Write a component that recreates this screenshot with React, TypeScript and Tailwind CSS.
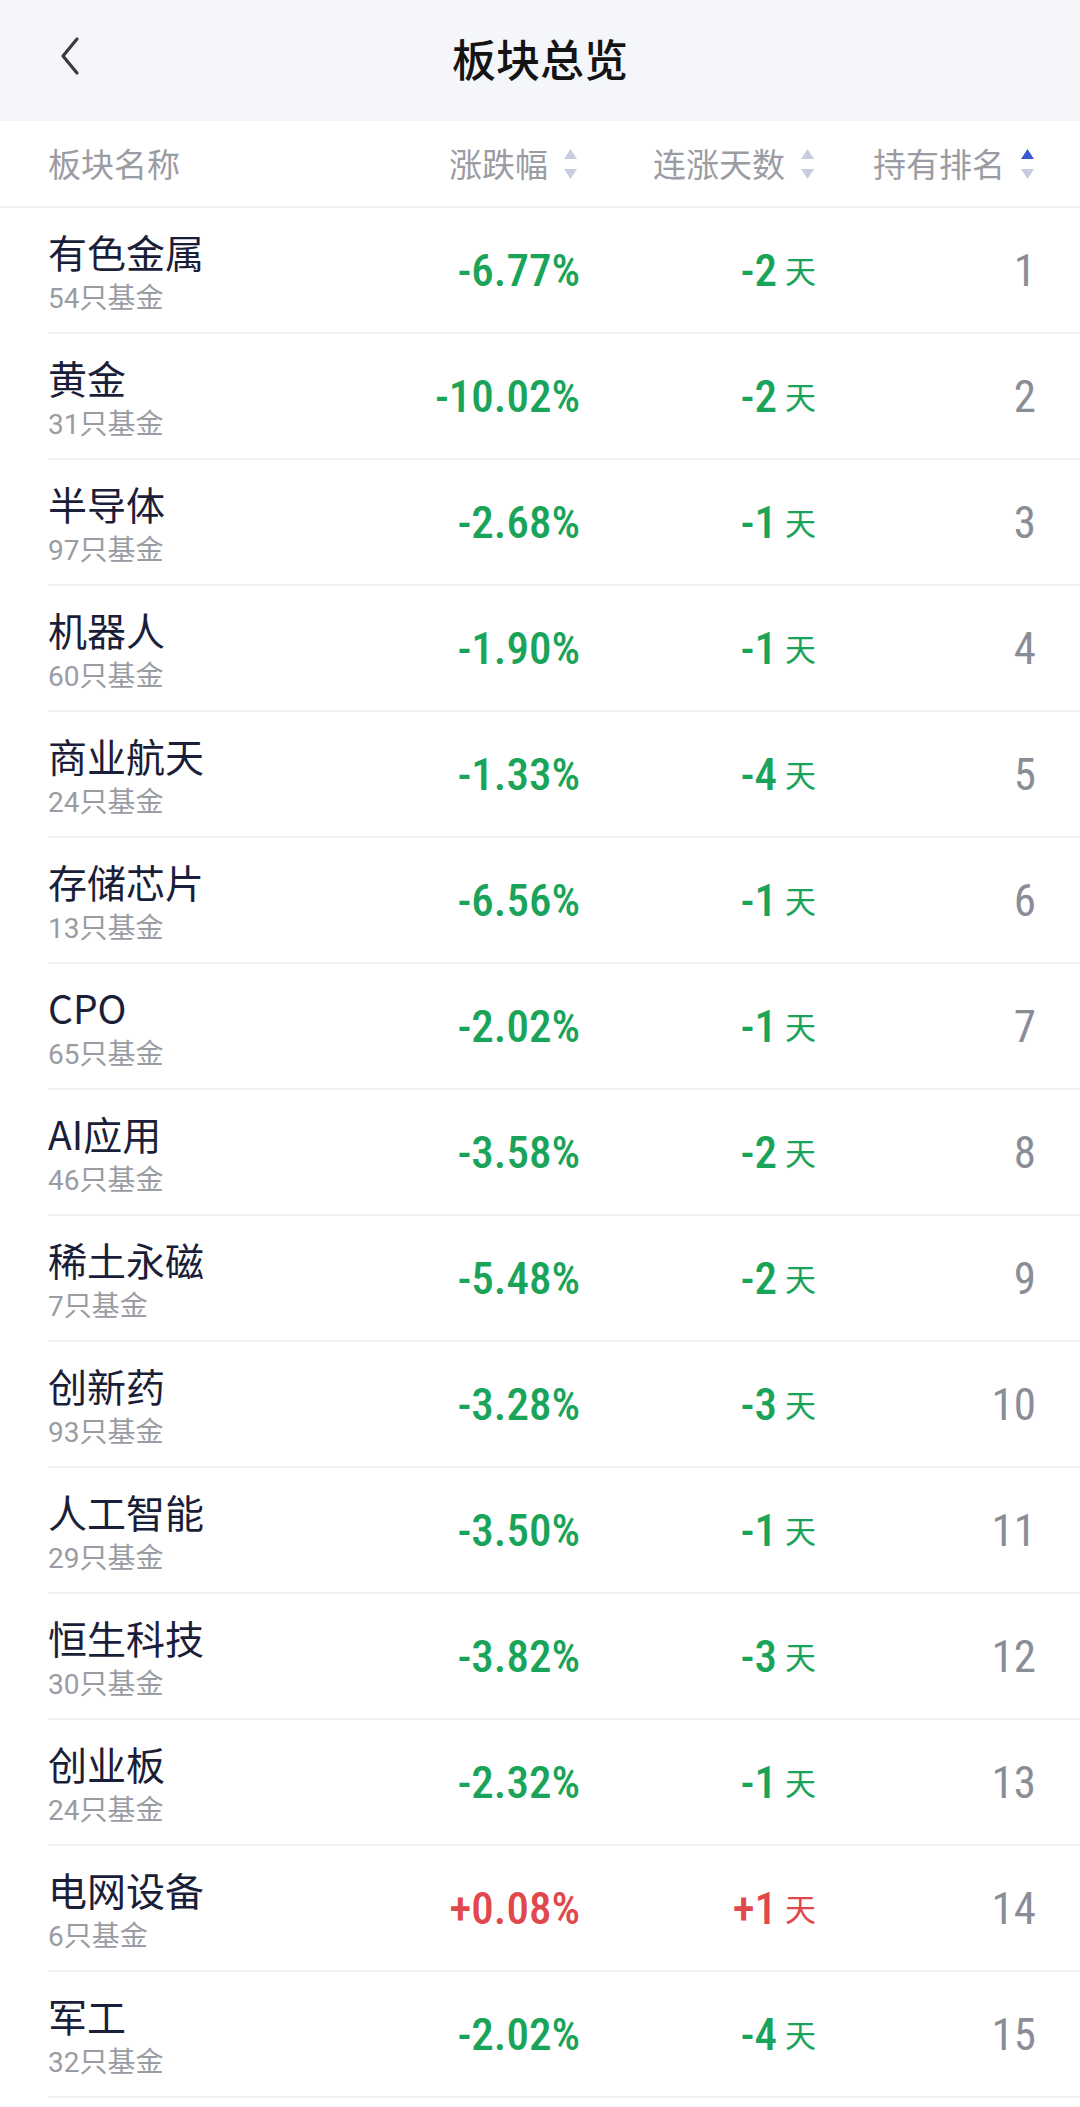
import React from "react";

type Row = { name: string; count: number; pct: string; days: string; rank: number };

const rows: Row[] = [
  { name: "有色金属", count: 54, pct: "-6.77%", days: "-2", rank: 1 },
  { name: "黄金", count: 31, pct: "-10.02%", days: "-2", rank: 2 },
  { name: "半导体", count: 97, pct: "-2.68%", days: "-1", rank: 3 },
  { name: "机器人", count: 60, pct: "-1.90%", days: "-1", rank: 4 },
  { name: "商业航天", count: 24, pct: "-1.33%", days: "-4", rank: 5 },
  { name: "存储芯片", count: 13, pct: "-6.56%", days: "-1", rank: 6 },
  { name: "CPO", count: 65, pct: "-2.02%", days: "-1", rank: 7 },
  { name: "AI应用", count: 46, pct: "-3.58%", days: "-2", rank: 8 },
  { name: "稀土永磁", count: 7, pct: "-5.48%", days: "-2", rank: 9 },
  { name: "创新药", count: 93, pct: "-3.28%", days: "-3", rank: 10 },
  { name: "人工智能", count: 29, pct: "-3.50%", days: "-1", rank: 11 },
  { name: "恒生科技", count: 30, pct: "-3.82%", days: "-3", rank: 12 },
  { name: "创业板", count: 24, pct: "-2.32%", days: "-1", rank: 13 },
  { name: "电网设备", count: 6, pct: "+0.08%", days: "+1", rank: 14 },
  { name: "军工", count: 32, pct: "-2.02%", days: "-4", rank: 15 },
];

const cjk = "font-['Noto_Sans_CJK_SC','Noto_Sans',sans-serif]";
const num = "font-['Roboto','Noto_Sans_CJK_SC',sans-serif]";

function SortIcon({ active }: { active?: boolean }) {
  return (
    <svg width="19" height="36" viewBox="0 0 19 36" className="ml-[13px] shrink-0">
      <polygon points="9.5,3 16,13 3,13" fill={active ? "#3d5ad6" : "#c9cbe0"} />
      <polygon points="9.5,33 16,23 3,23" fill="#c9cbe0" />
    </svg>
  );
}

export default function App() {
  return (
    <div className={`w-[1080px] min-h-[2107px] bg-white ${cjk}`}>
      {/* nav header */}
      <div className="relative h-[121px] bg-[#f5f6fa] flex items-center justify-center">
        <svg
          width="30"
          height="44"
          viewBox="0 0 30 44"
          className="absolute left-[55px] top-[35px]"
        >
          <polyline
            points="22,4 8,21 22,38"
            fill="none"
            stroke="#3a3b40"
            strokeWidth="3.2"
            strokeLinecap="round"
            strokeLinejoin="round"
          />
        </svg>
        <div className="text-[44px] leading-none font-medium text-[#141414] -mt-[6px]">板块总览</div>
      </div>

      {/* column header */}
      <div className="h-[87px] flex items-center pl-[48px] pr-[43px] border-b-2 border-[#f0f0f2] text-[33px] text-[#9b9ca3]">
        <div className="flex-1">板块名称</div>
        <div className="w-[250px] flex items-center justify-end">
          <span>涨跌幅</span>
          <SortIcon />
        </div>
        <div className="w-[237px] flex items-center justify-end">
          <span>连涨天数</span>
          <SortIcon />
        </div>
        <div className="w-[220px] flex items-center justify-end">
          <span>持有排名</span>
          <SortIcon active />
        </div>
      </div>

      {/* rows */}
      <div className="pl-[48px]">
        {rows.map((r) => {
          const up = r.pct.startsWith("+");
          const color = up ? "text-[#e0484c]" : "text-[#19a459]";
          return (
            <div key={r.rank} className="h-[126px] flex items-center pr-[43px] border-b-2 border-[#f3f3f5]">
              <div className="flex-1 self-stretch pt-[19px] flex flex-col">
                <div className="text-[39px] leading-[48px] text-[#1b1e38]">{r.name}</div>
                <div className="text-[28px] leading-[42px] text-[#9a9ca4]">
                  <span className={num}>{r.count}</span>只基金
                </div>
              </div>
              <div className={`w-[250px] text-right ${num} ${color} text-[45px] leading-none font-medium font-stretch-condensed`}>
                {r.pct}
              </div>
              <div className={`w-[237px] flex items-center justify-end ${color}`}>
                <span className={`${num} text-[45px] leading-none font-medium font-stretch-condensed`}>{r.days}</span>
                <span className="text-[31px] ml-[8px] mr-[1px]">天</span>
              </div>
              <div className={`w-[220px] pr-[1px] text-right ${num} text-[45px] leading-none text-[#8b8d96] font-stretch-condensed`}>
                {r.rank}
              </div>
            </div>
          );
        })}
      </div>
    </div>
  );
}
